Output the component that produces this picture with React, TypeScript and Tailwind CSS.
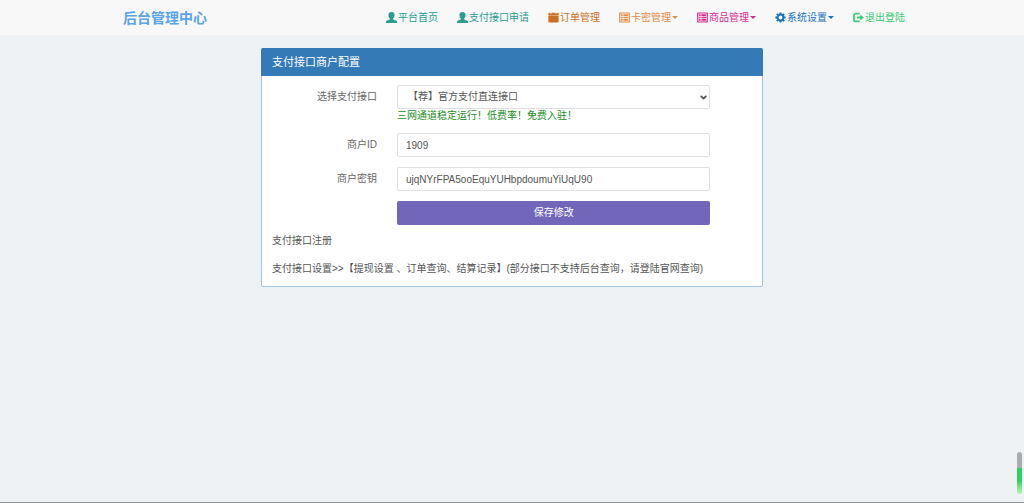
import { useState } from 'react';
import type { ReactNode } from 'react';
import { ChevronDown } from 'lucide-react';

function UserIcon() {
  return (
    <svg viewBox="0 0 14 14" className="w-[11px] h-[11px]" fill="currentColor" aria-hidden="true">
      <path d="M7 0c2.500 0 3.900 1.600 3.900 4 0 1.800-.8 3.400-1.900 4.300v.9c.6.700 2.100 1 3.700 1.700.9.400 1.300.9 1.300 1.700V14H0v-1.400c0-.8.400-1.300 1.300-1.700 1.600-.7 3.100-1 3.700-1.700v-.9C3.900 7.400 3.100 5.800 3.100 4 3.100 1.600 4.500 0 7 0z" />
    </svg>
  );
}

function CalendarIcon() {
  return (
    <svg viewBox="0 0 14 14" className="w-[11px] h-[11px]" fill="currentColor" aria-hidden="true">
      <path d="M1.500 1H3v1.200h1.500V1h5v1.200H11V1h1.500q1 0 1 1v2.300H.5V2q0-1 1-1z" />
      <path d="M.5 4.800h13v7.700q0 1-1 1h-11q-1 0-1-1z" />
    </svg>
  );
}

function ListIcon() {
  return (
    <svg viewBox="0 0 14 14" className="w-[11px] h-[11px]" fill="currentColor" aria-hidden="true">
      <path
        fillRule="evenodd"
        d="M1 .500h12q.8 0 .8.800v11.400q0 .8-.8.800H1q-.8 0-.8-.8V1.300q0-.8.8-.8zM1.700 2v10h10.600V2z"
      />
      <path d="M2.600 3h2v2h-2zM5.600 3h5.800v2H5.600zM2.600 6h2v2h-2zM5.600 6h5.800v2H5.600zM2.600 9h2v2h-2zM5.600 9h5.800v2H5.600z" />
    </svg>
  );
}

function CogIcon() {
  return (
    <svg viewBox="0 0 14 14" className="w-[11px] h-[11px]" aria-hidden="true">
      <circle cx="7" cy="7" r="3.700" fill="none" stroke="currentColor" strokeWidth="2.600" />
      <path
        d="M7 .500v2M7 11.500v2M.5 7h2M11.500 7h2M2.400 2.400l1.400 1.400M10.200 10.200l1.400 1.400M2.400 11.600l1.400-1.400M10.200 3.800l1.400-1.400"
        stroke="currentColor"
        strokeWidth="2.600"
      />
    </svg>
  );
}

function LogOutIcon() {
  return (
    <svg viewBox="0 0 14 14" className="w-[11px] h-[11px]" aria-hidden="true">
      <path
        d="M8.500 2H3.500Q1.300 2 1.300 4.200v5.600Q1.300 12 3.500 12h5"
        fill="none"
        stroke="currentColor"
        strokeWidth="2.200"
      />
      <path d="M5 5.700h4.200V3.200L13.900 7 9.200 10.800V8.300H5z" fill="currentColor" />
    </svg>
  );
}

interface NavItem {
  label: string;
  icon: ReactNode;
  color: string;
  dropdown?: boolean;
}

const navItems: NavItem[] = [
  { label: '平台首页', icon: <UserIcon />, color: 'text-[#2a9d8f]' },
  { label: '支付接口申请', icon: <UserIcon />, color: 'text-[#2a9d8f]' },
  { label: '订单管理', icon: <CalendarIcon />, color: 'text-[#cc6f1e]' },
  { label: '卡密管理', icon: <ListIcon />, color: 'text-[#e38b45]', dropdown: true },
  { label: '商品管理', icon: <ListIcon />, color: 'text-[#d42a8c]', dropdown: true },
  { label: '系统设置', icon: <CogIcon />, color: 'text-[#1b74bd]', dropdown: true },
  { label: '退出登陆', icon: <LogOutIcon />, color: 'text-[#3ccb78]' },
];

const inputClass =
  'block w-full h-6 rounded-xs border border-[#dde1e4] bg-white text-[10px] text-[#555] outline-none focus:border-[#66afe9]';
const labelClass = 'col-span-3 px-[10px] pt-[5px] text-right text-[#666]';

export default function App() {
  const [channel, setChannel] = useState('official');
  const [merchantId, setMerchantId] = useState('1909');
  const [merchantKey, setMerchantKey] = useState('ujqNYrFPA5ooEquYUHbpdoumuYiUqU90');

  return (
    <div className="min-h-screen bg-[#eef2f4] text-[10px] leading-[14px] text-[#555] font-['Liberation_Sans','Noto_Sans_CJK_SC',sans-serif]">
      <header className="bg-[#f8f8f8] border-b border-[#f1f2f3]">
        <div className="max-w-[786px] h-[35px] mx-auto flex items-center justify-between">
          <a href="#" className="pl-1 text-sm font-bold text-[#5ba4e6]">
            后台管理中心
          </a>
          <nav className="flex items-center gap-[19px]">
            {navItems.map((item) => (
              <a key={item.label} href="#" className={`flex items-center gap-px whitespace-nowrap ${item.color}`}>
                {item.icon}
                <span>{item.label}</span>
                {item.dropdown && (
                  <span className="border-x-3 border-t-3 border-x-transparent border-t-current" />
                )}
              </a>
            ))}
          </nav>
        </div>
      </header>

      <main className="max-w-[502px] mx-auto pt-3">
        <section className="rounded-xs border border-[#a3c4dc] bg-white">
          <h3 className="-mx-px -mt-px px-[11px] py-[6px] rounded-t-xs bg-[#337ab7] text-[11px] leading-4 text-white">
            支付接口商户配置
          </h3>

          <div className="px-[10px] pt-[9px] pb-[10px]">
            <form className="-mx-[10px] flex flex-col gap-[10px]" onSubmit={(e) => e.preventDefault()}>
              <div className="grid grid-cols-12">
                <label htmlFor="channel" className={labelClass}>
                  选择支付接口
                </label>
                <div className="col-span-8 px-[10px]">
                  <div className="relative">
                    <select
                      id="channel"
                      value={channel}
                      onChange={(e) => setChannel(e.target.value)}
                      className={`${inputClass} appearance-none pl-[10px] pr-5`}
                    >
                      <option value="official">【荐】官方支付直连接口</option>
                    </select>
                    <ChevronDown
                      className="absolute right-[2px] top-2 w-[9px] h-[9px] pointer-events-none"
                      strokeWidth={5}
                    />
                  </div>
                  <p className="text-[#228b22]">三网通道稳定运行！低费率！免费入驻！</p>
                </div>
              </div>

              <div className="grid grid-cols-12">
                <label htmlFor="merchant-id" className={labelClass}>
                  商户ID
                </label>
                <div className="col-span-8 px-[10px]">
                  <input
                    id="merchant-id"
                    type="text"
                    value={merchantId}
                    onChange={(e) => setMerchantId(e.target.value)}
                    className={`${inputClass} px-2`}
                  />
                </div>
              </div>

              <div className="grid grid-cols-12">
                <label htmlFor="merchant-key" className={labelClass}>
                  商户密钥
                </label>
                <div className="col-span-8 px-[10px]">
                  <input
                    id="merchant-key"
                    type="text"
                    value={merchantKey}
                    onChange={(e) => setMerchantKey(e.target.value)}
                    className={`${inputClass} px-2`}
                  />
                </div>
              </div>

              <div className="grid grid-cols-12">
                <div className="col-span-8 col-start-4 px-[10px]">
                  <button type="submit" className="block w-full h-6 rounded-xs bg-[#7266ba] text-white cursor-pointer">
                    保存修改
                  </button>
                </div>
              </div>
            </form>

            <p className="mt-[9px]">支付接口注册</p>
            <p className="mt-[14px]">
              支付接口设置&gt;&gt;【提现设置 、订单查询、结算记录】(部分接口不支持后台查询，请登陆官网查询)
            </p>
          </div>
        </section>
      </main>

      {/* Scroll progress */}
      <div className="fixed right-[2px] bottom-[9px] w-[5px] h-[42px] rounded-full overflow-hidden flex flex-col">
        <div className="h-4 bg-[#a9abac]" />
        <div className="flex-1 bg-linear-to-b from-[#2fcf64] from-50% to-[#b9f3bd]" />
      </div>
      <div className="fixed inset-x-0 bottom-0 h-px bg-[#8c9294]" />
    </div>
  );
}
